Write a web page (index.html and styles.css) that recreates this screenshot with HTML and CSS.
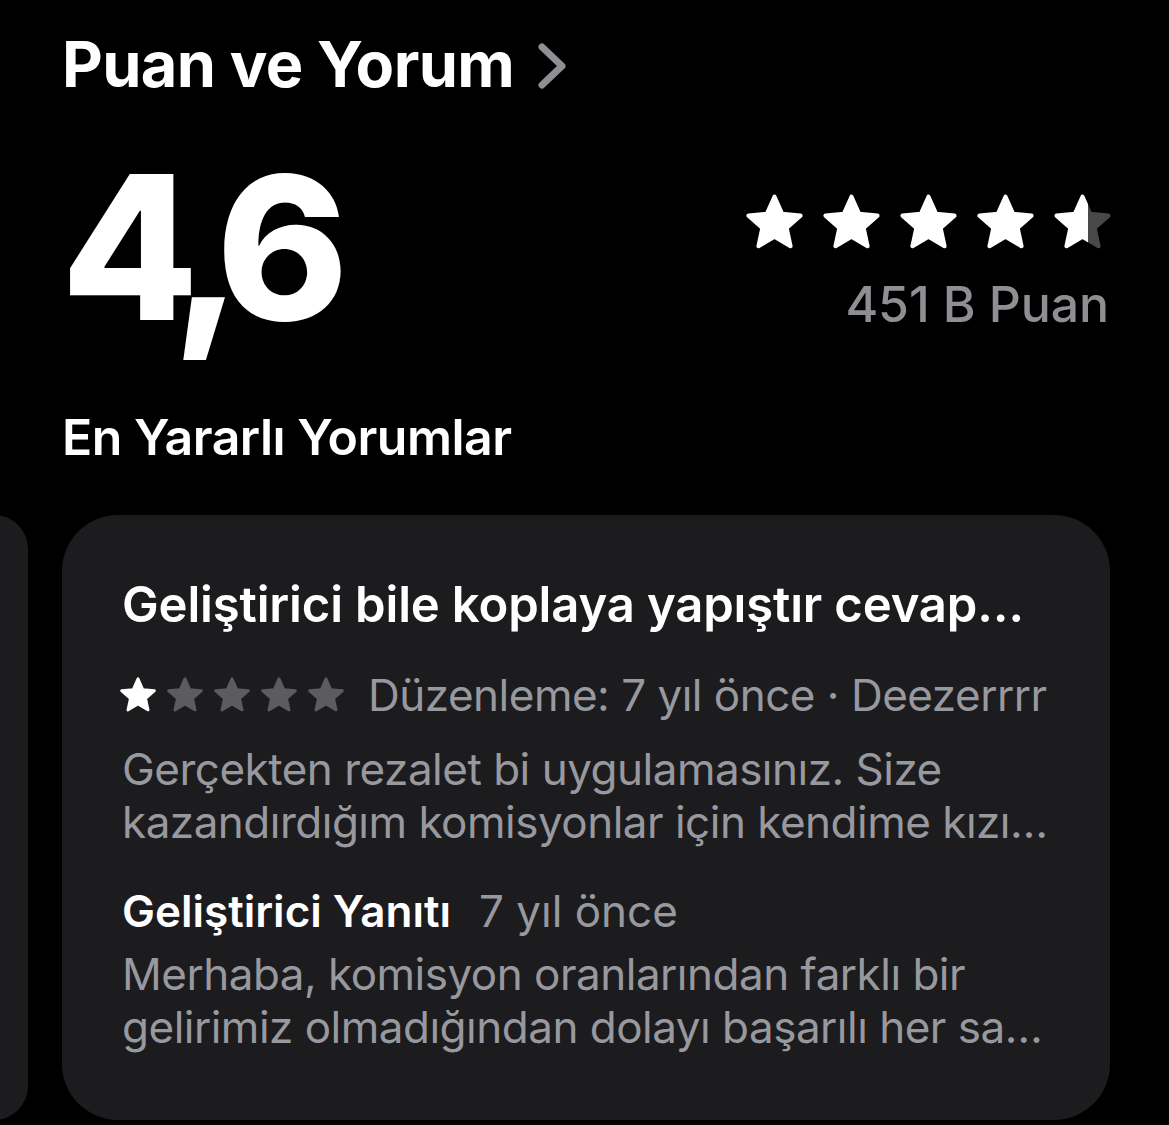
FILE: index.html
```html
<!DOCTYPE html>
<html lang="tr">
<head>
  <meta charset="UTF-8">
  <title>Puan ve Yorum</title>
  <link rel="stylesheet" href="styles.css">
</head>
<body>
  <svg width="0" height="0" class="defs">
    <defs>
      <symbol id="star" viewBox="0 0 24 24">
        <polygon points="12,2.2 14.9,8.7 21.9,9.4 16.6,14.1 18.1,21 12,17.4 5.9,21 7.4,14.1 2.1,9.4 9.1,8.7" stroke-linejoin="round" stroke-width="1.6"/>
      </symbol>
      <linearGradient id="halfFill" x1="0" x2="1" y1="0" y2="0">
        <stop offset="0.6" stop-color="#fff"/>
        <stop offset="0.6" stop-color="#48484a"/>
      </linearGradient>
    </defs>
  </svg>

  <div class="page">
    <div class="section-head">
      <h2>Puan ve Yorum</h2>
      <svg class="chevron" viewBox="0 0 32 50"><path d="M6 6 L26 25 L6 44" fill="none" stroke="#8e8e93" stroke-width="7" stroke-linecap="round" stroke-linejoin="round"/></svg>
    </div>

    <div class="summary">
      <div class="score">4,6</div>
      <div class="totals">
        <div class="big-stars">
          <svg class="on"><use href="#star"/></svg>
          <svg class="on"><use href="#star"/></svg>
          <svg class="on"><use href="#star"/></svg>
          <svg class="on"><use href="#star"/></svg>
          <svg class="half"><use href="#star"/></svg>
        </div>
        <div class="count">451 B Puan</div>
      </div>
    </div>

    <h3 class="sub-head">En Yararlı Yorumlar</h3>
  </div>

  <div class="carousel">
    <div class="card peek"></div>
    <div class="card review">
      <div class="review-title">Geliştirici bile koplaya yapıştır cevap…</div>
      <div class="meta">
        <div class="small-stars">
          <svg class="on"><use href="#star"/></svg>
          <svg class="off"><use href="#star"/></svg>
          <svg class="off"><use href="#star"/></svg>
          <svg class="off"><use href="#star"/></svg>
          <svg class="off"><use href="#star"/></svg>
        </div>
        <span>Düzenleme: 7 yıl önce · Deezerrrr</span>
      </div>
      <p class="body">Gerçekten rezalet bi uygulamasınız. Size<br>kazandırdığım komisyonlar için kendime kızı…</p>
      <div class="reply-head">
        <span class="reply-label">Geliştirici Yanıtı</span>
        <span class="reply-date">7 yıl önce</span>
      </div>
      <p class="body reply">Merhaba, komisyon oranlarından farklı bir<br>gelirimiz olmadığından dolayı başarılı her sa…</p>
    </div>
  </div>
</body>
</html>
```

FILE: styles.css
```css
body {
  margin: 0;
  background: #000;
  color: #fff;
  font-family: Inter, "Noto Sans", sans-serif;
  overflow: hidden;
}
.defs { position: absolute; }
.page {
  padding: 26px 55px 0 62px;
}
.section-head {
  display: flex;
  align-items: center;
  gap: 22px;
}
h2 {
  margin: 0;
  font-size: 63px;
  font-weight: 700;
  line-height: 77px;
  letter-spacing: -0.6px;
}
.chevron {
  width: 32px;
  height: 50px;
  margin-top: 2px;
}
.summary {
  display: flex;
  justify-content: space-between;
  margin-top: 44px;
}
.score {
  font-size: 200px;
  font-weight: 800;
  line-height: 200px;
  letter-spacing: -20px;
  margin-left: -1px;
}
.totals {
  display: flex;
  flex-direction: column;
  align-items: flex-end;
  padding-top: 44px;
}
.big-stars {
  display: flex;
  gap: 14px;
}
.big-stars svg {
  width: 63px;
  height: 63px;
}
svg.on { fill: #fff; stroke: #fff; }
svg.off { fill: #5c5c60; stroke: #5c5c60; }
svg.half { fill: url(#halfFill); stroke: url(#halfFill); }
.count {
  color: #8e8e93;
  font-size: 50px;
  font-weight: 500;
  line-height: 60px;
  margin: 20px 5px 0 0;
  letter-spacing: -0.1px;
}
.sub-head {
  margin: 60px 0 0;
  font-size: 50px;
  font-weight: 600;
  line-height: 60px;
  letter-spacing: -0.5px;
}
.carousel {
  display: flex;
  gap: 34px;
  margin-top: 48px;
  margin-left: -6px;
}
.card {
  background: #1c1c1e;
  border-radius: 56px;
  height: 605px;
}
.card.peek {
  width: 34px;
  flex: none;
  border-radius: 0 56px 56px 0;
}
.card.review {
  width: 1048px;
  flex: none;
  box-sizing: border-box;
  padding: 60px 40px 0 60px;
}
.review-title {
  font-size: 49px;
  font-weight: 600;
  line-height: 60px;
  letter-spacing: -0.15px;
  white-space: nowrap;
}
.meta {
  display: flex;
  align-items: center;
  gap: 22px;
  margin-top: 32px;
  color: #98989f;
  font-size: 44px;
  line-height: 56px;
  letter-spacing: -0.5px;
  white-space: nowrap;
}
.small-stars {
  display: flex;
  gap: 7px;
  margin-left: -4px;
}
.small-stars svg {
  width: 40px;
  height: 40px;
}
.body {
  margin: 20px 0 0;
  color: #98989f;
  font-size: 44px;
  line-height: 53px;
  letter-spacing: -0.5px;
  white-space: nowrap;
}
.body.reply {
  margin-top: 9px;
}
.reply-head {
  display: flex;
  align-items: baseline;
  gap: 28px;
  margin-top: 34px;
  font-size: 44px;
  line-height: 56px;
}
.reply-label {
  font-weight: 600;
}
.reply-date {
  color: #98989f;
}
```
